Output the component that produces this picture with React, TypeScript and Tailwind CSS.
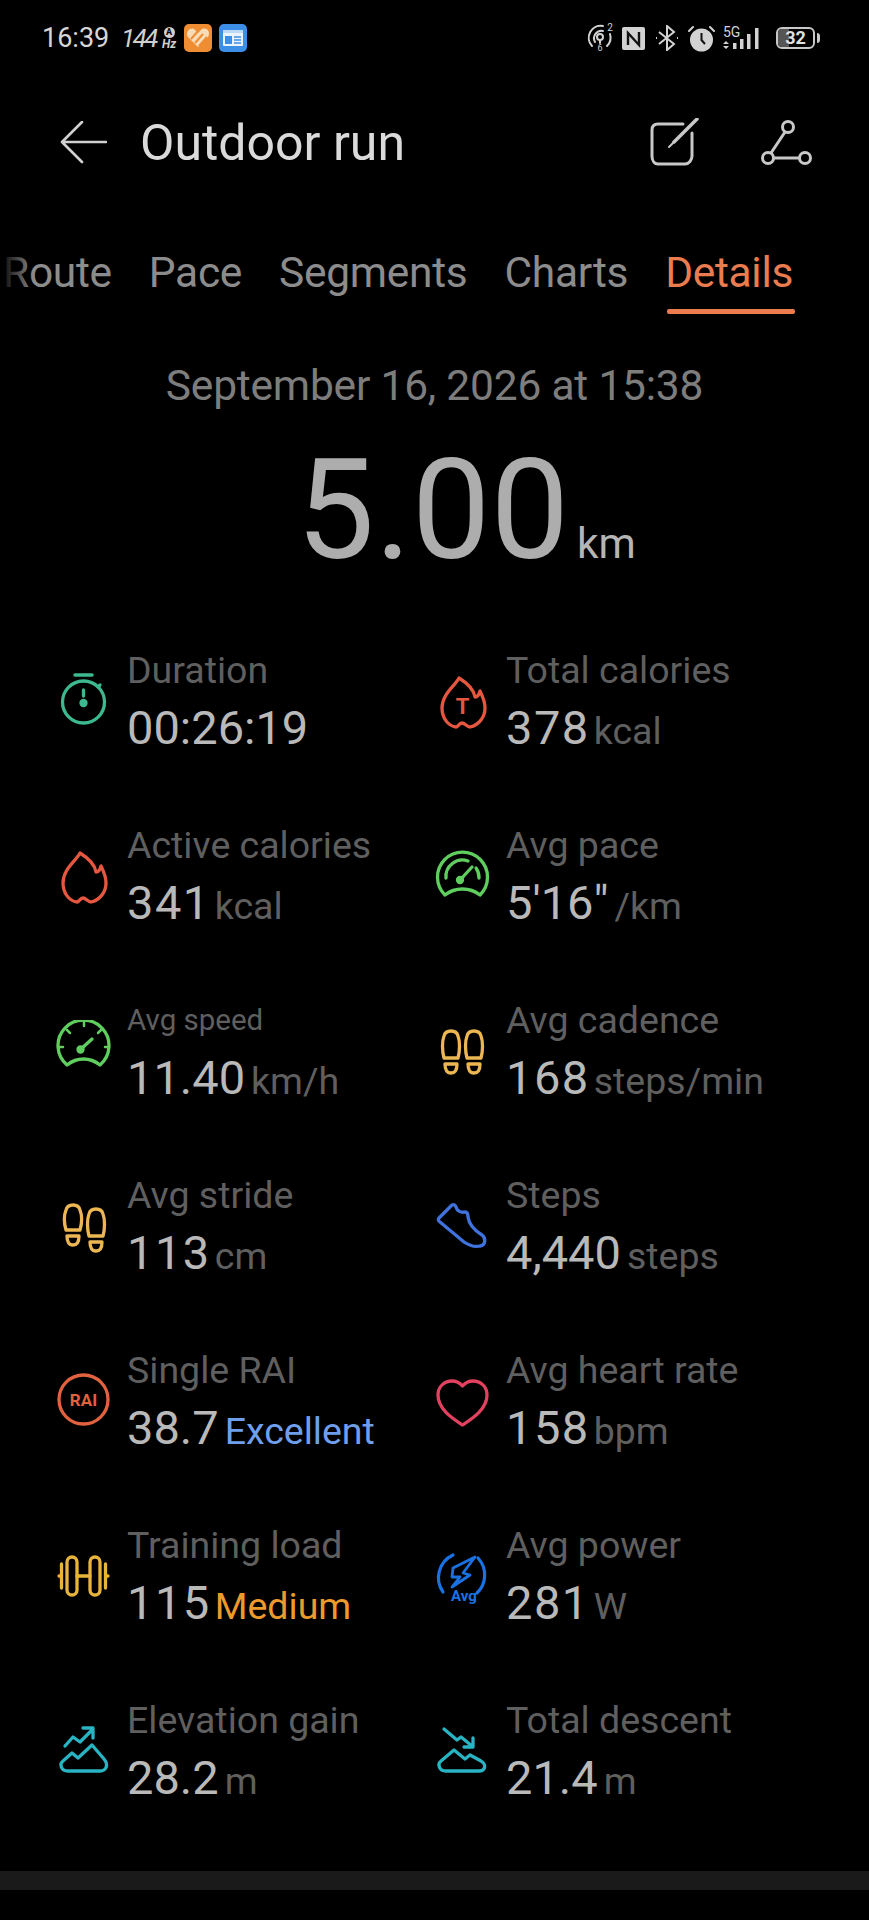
import React from "react";

const FLAME = "M27 8C23 16 10 24 10 38C10 48 16 56 24 57C26 57 27 53 30 53C33 53 35 57 38 57C47 55 53 47 53 38C53 32 51 27 48 21C47 25 45 27 43 27C42 20 35 13 27 8Z";

function Icon({ color, children }: { color: string; children: React.ReactNode }) {
  return (
    <svg width="60" height="60" viewBox="0 0 60 60" fill="none" stroke={color} strokeWidth="3.3" strokeLinecap="round" strokeLinejoin="round" className="shrink-0">
      {children}
    </svg>
  );
}

const Foot = ({ x, y, h }: { x: number; y: number; h: number }) => (
  <g transform={`translate(${x} ${y})`}>
    <path d={`M2 ${h - 15}C0 ${h - 22} 0 11 2 6C3 2 6 1 9 1C12 1 15 2 16 6C18 11 18 ${h - 22} 16 ${h - 15}Z`} />
    <path d={`M3 ${h - 9}H15C15 ${h - 3} 13 ${h} 9 ${h}C5 ${h} 3 ${h - 3} 3 ${h - 9}Z`} />
  </g>
);

const icons: Record<string, React.ReactNode> = {
  stopwatch: (
    <Icon color="#3cb98f">
      <circle cx="30.5" cy="32" r="21" />
      <path d="M22 5H39" strokeWidth="3.5" />
      <path d="M45 17L47 15" />
      <path d="M30.5 20V26" />
      <circle cx="30.5" cy="33" r="2.5" fill="#3cb98f" />
    </Icon>
  ),
  flameT: (
    <Icon color="#e5573f">
      <path d={FLAME} />
      <text x="30.5" y="44" textAnchor="middle" fontSize="22" fontWeight="700" fill="#e5573f" stroke="none" fontFamily="Roboto, sans-serif">T</text>
    </Icon>
  ),
  flame: (
    <Icon color="#e5573f">
      <path d={FLAME} />
    </Icon>
  ),
  gaugeTicks: (
    <Icon color="#5fce5f">
      <path d="M14 45A25.5 25.5 0 1 1 47 45C37 37 24 37 14 45Z" />
      <path d="M31 2V6M14 10L17 13M48 10L45 13M6 27H10M56 27H52" strokeWidth="2.5" />
      <path d="M28 29L39 19" />
      <circle cx="27.5" cy="29.5" r="2.5" fill="#5fce5f" />
    </Icon>
  ),
  gaugeArc: (
    <Icon color="#5fce5f">
      <path d="M13 50A25 25 0 1 1 48 50C38 42 23 42 13 50Z" />
      <path d="M14 33A16.5 16.5 0 0 1 36 16M44 23A16.5 16.5 0 0 1 47 33" />
      <path d="M29 34L40 22" />
      <circle cx="28" cy="35" r="2.5" fill="#5fce5f" />
    </Icon>
  ),
  feetEven: (
    <Icon color="#ecb653">
      <Foot x={10} y={10} h={43} />
      <Foot x={33} y={10} h={43} />
    </Icon>
  ),
  feetStagger: (
    <Icon color="#ecb653">
      <Foot x={11} y={9} h={41} />
      <Foot x={34} y={13} h={43} />
    </Icon>
  ),
  shoe: (
    <Icon color="#3f72dc">
      <path d="M7 23L20 10C22 9 23 10 24 12C25 16 29 18 33 17C35 17 36 19 36 22C37 30 42 35 50 40C54 43 54 50 48 51C44 52 38 51 32 47L8 27C6 26 6 24 7 23Z" />
    </Icon>
  ),
  rai: (
    <Icon color="#e0623e">
      <circle cx="30.5" cy="29.5" r="24.5" />
      <text x="30.5" y="35.5" textAnchor="middle" fontSize="17" fontWeight="700" fill="#e0623e" stroke="none" fontFamily="Roboto, sans-serif">RAI</text>
    </Icon>
  ),
  heart: (
    <Icon color="#e2415f">
      <path d="M30.5 55C20 48 6 39 6 25C6 16 13 11 20 11C25 11 28 13 30.5 16C33 13 36 11 41 11C48 11 55 16 55 25C55 39 41 48 30.5 55Z" />
    </Icon>
  ),
  dumbbell: (
    <Icon color="#e9b43a">
      <rect x="14" y="12" width="10" height="38" rx="5" />
      <rect x="37" y="12" width="10" height="38" rx="5" />
      <path d="M24 31H37M8.5 19V43M52.5 19V43M6 31H7M54 31H55" />
    </Icon>
  ),
  power: (
    <Icon color="#1a72e2">
      <path d="M11 47A25 25 0 0 1 21 10M46 13A25 25 0 0 1 45 48" strokeWidth="3.2" />
      <path d="M43 12L21 23L20 32H28L20 42L38 30L31 28Z" strokeWidth="2.8" />
      <text x="32" y="56" textAnchor="middle" fontSize="15" fontWeight="700" fill="#1a72e2" stroke="none" fontFamily="Roboto, sans-serif">Avg</text>
    </Icon>
  ),
  up: (
    <Icon color="#28b4c3">
      <path d="M12 26L20 17L27 22L40 9M30 8H40V18" />
      <path d="M15 51C8 51 6 44 10 41L19 33L25 38L39 25L51 39C56 45 53 51 47 51Z" />
    </Icon>
  ),
  down: (
    <Icon color="#28b4c3">
      <path d="M12 9L25 20L29 17L40 26M41 18V27H32" />
      <path d="M14 51C7 51 5 44 9 41L22 30L33 39L38 35L49 41C55 45 53 51 47 51Z" />
    </Icon>
  ),
};

type M = { icon: string; label: string; value: string; unit: string; unitColor?: string; small?: boolean; wide?: boolean };

const metrics: M[] = [
  { icon: "stopwatch", label: "Duration", value: "00:26:19", unit: "" },
  { icon: "flameT", label: "Total calories", value: "378", unit: "kcal", wide: true },
  { icon: "flame", label: "Active calories", value: "341", unit: "kcal", wide: true },
  { icon: "gaugeArc", label: "Avg pace", value: "5'16\"", unit: "/km" },
  { icon: "gaugeTicks", label: "Avg speed", value: "11.40", unit: "km/h", small: true },
  { icon: "feetEven", label: "Avg cadence", value: "168", unit: "steps/min", wide: true },
  { icon: "feetStagger", label: "Avg stride", value: "113", unit: "cm", wide: true },
  { icon: "shoe", label: "Steps", value: "4,440", unit: "steps" },
  { icon: "rai", label: "Single RAI", value: "38.7", unit: "Excellent", unitColor: "text-[#6f9fec]" },
  { icon: "heart", label: "Avg heart rate", value: "158", unit: "bpm", wide: true },
  { icon: "dumbbell", label: "Training load", value: "115", unit: "Medium", unitColor: "text-[#ed9a2d]", wide: true },
  { icon: "power", label: "Avg power", value: "281", unit: "W", wide: true },
  { icon: "up", label: "Elevation gain", value: "28.2", unit: "m" },
  { icon: "down", label: "Total descent", value: "21.4", unit: "m" },
];

function StatusLeft() {
  return (
    <div className="flex items-center">
      <span className="text-[27px] font-normal text-[#d6d6d6] w-[79px]">16:39</span>
      <span className="text-[26px] italic font-normal text-[#cfcfcf] tracking-[-2.5px] w-[37px]">144</span>
      <span className="flex flex-col items-center w-[22px] text-[#cfcfcf] leading-none mr-[4px]">
        <span className="w-[11px] h-[11px] rounded-full bg-[#cfcfcf] text-black text-[9px] font-bold flex items-center justify-center">A</span>
        <span className="text-[12px] italic font-bold">Hz</span>
      </span>
      <svg width="28" height="28" viewBox="0 0 28 28" className="mr-[7px]">
        <rect width="28" height="28" rx="5" fill="#ef8d33" />
        <path d="M14 23L4 13C1 8 6 3 10 5L14 9L18 5C23 3 27 8 24 13Z" fill="#f8dcb8" />
        <path d="M7 15L15 6M11 19L19 10M15 22L23 13" stroke="#ef8d33" strokeWidth="2" />
      </svg>
      <svg width="28" height="28" viewBox="0 0 28 28">
        <rect width="28" height="28" rx="5" fill="#3d8fe6" />
        <rect x="4" y="6" width="20" height="16" rx="1" fill="#eaf3fd" />
        <rect x="4" y="6" width="20" height="3" fill="#bcd9f7" />
        <rect x="6" y="12" width="7" height="8" fill="#3d8fe6" />
        <path d="M15 13H22M15 16H22M15 19H22" stroke="#3d8fe6" strokeWidth="1.4" />
      </svg>
    </div>
  );
}

function StatusRight() {
  return (
    <div className="flex items-center text-[#d2d2d2]">
      <svg width="28" height="30" viewBox="0 0 28 30" fill="none" stroke="#d2d2d2" strokeWidth="2" strokeLinecap="round" className="mr-[8px]">
        <path d="M6 23A12 12 0 0 1 17 3" />
        <path d="M24 11A12 12 0 0 1 21 23" />
        <path d="M9 19A7.5 7.5 0 0 1 17 8" />
        <circle cx="14" cy="14" r="3" />
        <path d="M14 17V20" />
        <text x="14" y="28" textAnchor="middle" fontSize="9" fill="#d2d2d2" stroke="none" fontFamily="Roboto, sans-serif">6</text>
        <text x="24" y="8" textAnchor="middle" fontSize="10" fill="#d2d2d2" stroke="none" fontFamily="Roboto, sans-serif">2</text>
      </svg>
      <svg width="23" height="23" viewBox="0 0 23 23" className="mr-[10px]">
        <rect width="23" height="23" rx="2" fill="#d2d2d2" />
        <path d="M6 18V6L17 18V5" fill="none" stroke="#111" strokeWidth="2.4" />
      </svg>
      <svg width="24" height="26" viewBox="0 0 24 26" fill="none" stroke="#d2d2d2" strokeWidth="2" className="mr-[9px]">
        <path d="M4 7L19 19L12 25V1L19 7L4 19" />
        <path d="M1 13H2M22 13H23" />
      </svg>
      <svg width="27" height="27" viewBox="0 0 27 27" className="mr-[8px]">
        <circle cx="13.5" cy="15" r="11.5" fill="#d2d2d2" />
        <path d="M13.5 8V15L17 19" fill="none" stroke="#111" strokeWidth="2" />
        <path d="M1 6L5 2M26 6L22 2" stroke="#d2d2d2" strokeWidth="2" strokeLinecap="round" />
      </svg>
      <span className="relative w-[42px] h-[24px] mr-[11px]">
        <span className="absolute left-0 -top-[1px] text-[14px] leading-[14px]">5G</span>
        <svg width="42" height="24" viewBox="0 0 42 24" className="absolute left-0 top-0" fill="#d2d2d2">
          <path d="M3 15L6 18H0ZM3 23L0 20H6Z" />
          <rect x="10" y="17" width="3.5" height="6" />
          <rect x="17" y="13" width="3.5" height="10" />
          <rect x="24" y="8" width="3.5" height="15" />
          <rect x="32" y="2" width="3.5" height="21" />
        </svg>
      </span>
      <span className="relative w-[44px] h-[22px] flex items-center justify-center">
        <span className="absolute left-0 top-0 w-[39px] h-[22px] rounded-[6px] border-2 border-[#c8c8c8] overflow-hidden">
          <span className="block w-[11px] h-full bg-[#555]" />
        </span>
        <span className="relative text-[18px] leading-none font-bold text-[#e0e0e0] -ml-[5px]">32</span>
        <span className="absolute right-0 top-[6px] w-[3px] h-[10px] rounded-r bg-[#c8c8c8]" />
      </span>
    </div>
  );
}

export default function App() {
  return (
    <div className="w-[869px] h-[1920px] bg-black overflow-hidden font-['Roboto',sans-serif] flex flex-col">
      <div className="h-[76px] pl-[42px] pr-[49px] flex items-center justify-between shrink-0">
        <StatusLeft />
        <StatusRight />
      </div>

      <div className="h-[134px] flex items-center pl-[60px] pr-[57px] shrink-0">
        <svg width="47" height="44" viewBox="0 0 47 44" fill="none" stroke="#d0d0d0" strokeWidth="2.6" strokeLinecap="round" strokeLinejoin="round" className="mr-[33px]">
          <path d="M46 21H2M22 1L2 21L22 41" />
        </svg>
        <span className="text-[50px] text-[#dadada] leading-none flex-1">Outdoor run</span>
        <svg width="50" height="50" viewBox="0 0 50 50" fill="none" stroke="#c8c8c8" strokeWidth="3" strokeLinecap="round" className="mr-[61px]">
          <path d="M34 6H9C5 6 3 8 3 12V38C3 42 5 46 9 46H36C40 46 43 42 43 38V15" />
          <path d="M48 1L25 24" strokeWidth="3.5" />
          <path d="M25 24L20 29" strokeWidth="2" />
        </svg>
        <svg width="52" height="46" viewBox="0 0 52 46" fill="none" stroke="#c8c8c8" strokeWidth="3">
          <circle cx="28" cy="7" r="5.5" />
          <circle cx="8" cy="38" r="5.5" />
          <circle cx="45" cy="38" r="5.5" />
          <path d="M25 12L11 33M14 38H39" />
        </svg>
      </div>

      <div className="relative h-[104px] shrink-0">
        <div className="h-[100px] pt-[34px] pl-[3px] flex gap-[37px] text-[42.5px] leading-[58px] text-[#8c8c8c] tracking-[-0.3px]">
          <span>Route</span>
          <span>Pace</span>
          <span>Segments</span>
          <span>Charts</span>
          <span className="text-[#ea7c50] relative">Details</span>
        </div>
        <div className="absolute left-0 top-0 w-[34px] h-full bg-gradient-to-r from-black to-transparent" />
        <div className="absolute left-[667px] bottom-0 w-[128px] h-[5px] rounded-[2px] bg-[#ea7c50]" />
      </div>

      <div className="h-[298px] shrink-0 flex flex-col items-center">
        <div className="text-[42.5px] leading-[46px] mt-[49px] text-[#7d7d7d] tracking-[-0.2px]">September 16, 2026 at 15:38</div>
        <div className="flex items-baseline mt-[26px] pl-[63px] leading-[150px]">
          <span className="text-[140px] text-[#adadad] leading-[150px]">5.00</span>
          <span className="text-[42.5px] text-[#b5b5b5] ml-[8px]">km</span>
        </div>
      </div>

      <div className="grid grid-cols-[379px_379px] auto-rows-[175px] pl-[53px] shrink-0">
        {metrics.map((m) => (
          <div key={m.label} className="flex items-center">
            {icons[m.icon]}
            <div className="ml-[14px] pt-[8px] flex flex-col">
              <span className={`${m.small ? "text-[29.5px]" : "text-[37.5px]"} h-[46px] leading-[46px] text-[#5f5f5f] whitespace-nowrap`}>{m.label}</span>
              <span className="flex items-baseline whitespace-nowrap h-[66px] leading-[66px] mt-[2px]">
                <span className={`text-[47px] text-[#b9b9b9] ${m.wide ? "tracking-[1.5px]" : ""}`}>{m.value}</span>
                {m.unit && <span className={`text-[37.5px] ${m.wide ? "ml-[4px]" : "ml-[6px]"} ${m.unitColor ?? "text-[#5f5f5f]"}`}>{m.unit}</span>}
              </span>
            </div>
          </div>
        ))}
      </div>

      <div className="flex-1" />
      <div className="h-[19px] bg-[#1a1a1a] shrink-0 mb-[30px]" />
    </div>
  );
}
